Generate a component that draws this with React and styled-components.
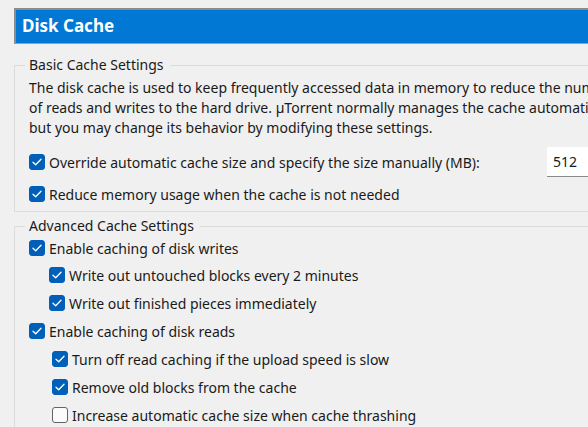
import React from 'react'
import styled, { createGlobalStyle } from 'styled-components'

const GlobalStyle = createGlobalStyle`
  html, body {
    margin: 0;
    padding: 0;
    background: #f0f0f0;
    overflow: hidden;
  }
  body {
    font-family: 'Noto Sans', 'Segoe UI', sans-serif;
    color: #1a1a1a;
  }
`

const Page = styled.div`
  width: 820px;
  padding: 8px 0 0 14px;
  box-sizing: border-box;
`

const Header = styled.div`
  height: 36px;
  display: flex;
  align-items: center;
  padding: 0 0 3px 6px;
  background: #0078d4;
  border-top: 2px solid #8c8c8c;
  border-left: 2px solid #8c8c8c;
  border-bottom: 1px solid #a0a0a0;
  box-sizing: border-box;
  color: #fff;
  font-size: 17px;
  font-weight: 700;
`

const Group = styled.fieldset`
  margin: ${p => p.$top}px 0 0 0;
  padding: 0 0 ${p => p.$bottom}px 14px;
  border: 1px solid #dcdcdc;
  min-width: 0;
`

const Legend = styled.legend`
  padding: 0 6px 0 4px;
  margin-left: -4px;
  font-size: 14px;
  line-height: 18px;
`

const Description = styled.div`
  margin-top: 4px;
  font-size: 14px;
  line-height: 20px;
  white-space: nowrap;
`

const Row = styled.div`
  display: grid;
  grid-template-columns: ${p => (p.$wide ? '518px 1fr' : '1fr')};
  align-items: center;
  height: ${p => p.$h}px;
  margin-top: ${p => p.$mt}px;
  padding-left: ${p => p.$indent}px;
`

const Label = styled.label`
  display: flex;
  align-items: center;
  gap: 4px;
  font-size: 14px;
  white-space: nowrap;
`

const Box = styled.span`
  width: 16px;
  height: 16px;
  box-sizing: border-box;
  border-radius: 3px;
  display: inline-flex;
  align-items: center;
  justify-content: center;
  flex-shrink: 0;
  background: ${p => (p.$checked ? '#005fb8' : '#fbfbfb')};
  border: 1px solid ${p => (p.$checked ? '#005fb8' : '#646464')};
`

const SizeInput = styled.div`
  height: 30px;
  width: 120px;
  background: #fff;
  border-bottom: 1px solid #8a8a8a;
  box-sizing: border-box;
  display: flex;
  align-items: center;
  padding-left: 6px;
  font-size: 14px;
`

const Check = ({ checked }) => (
  <Box $checked={checked}>
    {checked && (
      <svg width="10" height="8" viewBox="0 0 10 8">
        <path d="M1 4.2 L3.7 6.8 L9 1.3" fill="none" stroke="#fff" strokeWidth="1.3" strokeLinecap="round" strokeLinejoin="round" />
      </svg>
    )}
  </Box>
)

const Option = ({ checked = true, indent = 0, h = 28, mt = 0, children, extra }) => (
  <Row $indent={indent} $h={h} $mt={mt} $wide={!!extra}>
    <Label>
      <Check checked={checked} />
      {children}
    </Label>
    {extra}
  </Row>
)

export default function App() {
  return (
    <Page>
      <GlobalStyle />
      <Header>Disk Cache</Header>

      <Group $top={12} $bottom={1}>
        <Legend>Basic Cache Settings</Legend>
        <Description>
          The disk cache is used to keep frequently accessed data in memory to reduce the number
          <br />
          of reads and writes to the hard drive. µTorrent normally manages the cache automatically,
          <br />
          but you may change its behavior by modifying these settings.
        </Description>
        <Option h={32} mt={8} extra={<SizeInput>512</SizeInput>}>
          Override automatic cache size and specify the size manually (MB):
        </Option>
        <Option h={32}>Reduce memory usage when the cache is not needed</Option>
      </Group>

      <Group $top={5} $bottom={0}>
        <Legend>Advanced Cache Settings</Legend>
        <Option h={26}>Enable caching of disk writes</Option>
        <Option indent={20}>Write out untouched blocks every 2 minutes</Option>
        <Option indent={20}>Write out finished pieces immediately</Option>
        <Option>Enable caching of disk reads</Option>
        <Option indent={23}>Turn off read caching if the upload speed is slow</Option>
        <Option indent={23}>Remove old blocks from the cache</Option>
        <Option indent={23} checked={false}>Increase automatic cache size when cache thrashing</Option>
      </Group>
    </Page>
  )
}
